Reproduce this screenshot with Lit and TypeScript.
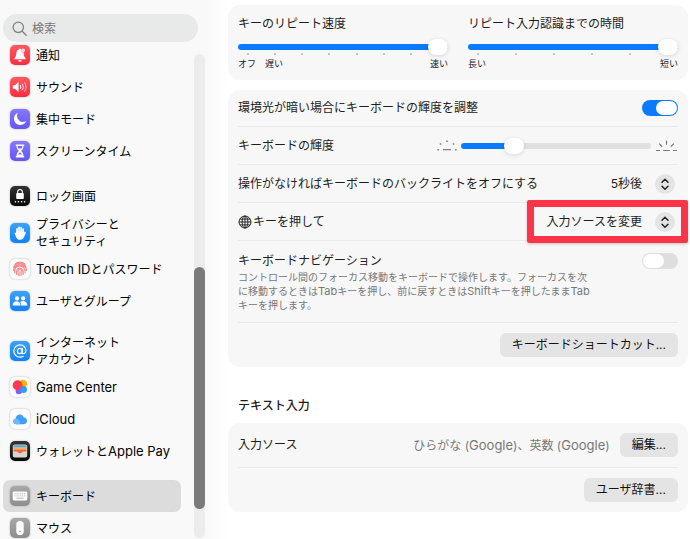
import { LitElement, html, svg, css, nothing } from "lit";
import { customElement, property } from "lit/decorators.js";
import { classMap } from "lit/directives/class-map.js";

const FONT = css`Inter, "Noto Sans CJK JP", sans-serif`;

// Wraps Latin runs so they can be set one size larger than the kana around them.
const mixed = (text: string) =>
  text
    .split(/([A-Za-z][A-Za-z ]*[A-Za-z])/)
    .map((part, i) => (i % 2 ? html`<span class="latin">${part}</span>` : part));

const glyphs: Record<string, unknown> = {
  bell: svg`<path fill="#fff" d="M10 3.400c.5 0 .9.3 1 .8l.3.2a2 2 0 0 0 1.600 3c.3 0 .5 0 .7-.1.2 2.900.5 4.600 1.800 5.600.5.5.3 1.300-.4 1.300H5c-.7 0-.9-.8-.4-1.300C6.300 11.700 6 9.800 6.500 7.300 6.800 5.600 7.700 4.700 9 4.200c.1-.5.5-.8 1-.8z"/><circle cx="13.100" cy="5.300" r="1.900" fill="#ffd6d8"/><path fill="#fff" d="M8.200 15.200h3.600a1.800 1.600 0 0 1-3.600 0z"/>`,
  sound: svg`<path fill="#fff" d="M2.800 8.200h2.100L8.500 5v10l-3.600-3.200H2.800z"/><g fill="none" stroke="#fff" stroke-linecap="round"><path d="M10.400 8.300q1.100 1.700 0 3.400"/><path d="M12.500 7q2 3 0 6" opacity=".85"/><path d="M14.700 5.700q2.900 4.300 0 8.600" opacity=".7"/></g>`,
  moon: svg`<path fill="#fff" d="M8 3.800a6.300 6.300 0 1 0 8.200 8.100A5.900 5.900 0 0 1 8 3.800z"/>`,
  hourglass: svg`<path fill="#fff" d="M5.800 3.500h8.400v1.600h-.8c0 2.500-.9 3.700-2.300 4.900 1.400 1.200 2.300 2.400 2.300 4.900h.8v1.600H5.800v-1.600h.8c0-2.500.9-3.700 2.300-4.900-1.400-1.200-2.300-2.400-2.300-4.900h-.8z"/><path fill="#7468f5" d="M7.800 5.100h4.400c0 1-.2 1.700-.5 2.300H8.300c-.3-.6-.5-1.300-.5-2.300zM10 11.200c1 .8 1.600 1.500 1.900 2.300H8.100c.3-.8.9-1.500 1.900-2.300z"/>`,
  lock: svg`<rect x="6.200" y="7" width="7.600" height="6" rx="1" fill="#fff"/><path d="M7.700 7.300V5.800a2.300 2.300 0 0 1 4.600 0v1.500" fill="none" stroke="#fff" stroke-width="1.100"/><g fill="#fff"><circle cx="5.400" cy="15.700" r=".8"/><circle cx="8.400" cy="15.700" r=".8"/><circle cx="11.600" cy="15.700" r=".8"/><circle cx="14.600" cy="15.700" r=".8"/></g>`,
  hand: svg`<g stroke="#fff" stroke-width="1.700" stroke-linecap="round"><path d="M7 10V5.800M9 9V4.300M11.100 9V4.500M13.100 10V6M5.400 10.500 7 13M15 9.500 13.600 13"/></g><path fill="#fff" d="M6.100 8.500h7.900v4.300c0 2.500-1.500 4-3.800 4-2.200 0-3.500-1-4.400-3.100z"/>`,
  finger: svg`<g fill="none" stroke="#f5878d" stroke-width="1.100" stroke-linecap="round"><path d="M5 5.200a7 7 0 0 1 10 0M3.600 8.300C5 3.800 13.800 3 16 8.300M3.500 11.500c0-7.200 13-7.200 13 0M4.700 14c-1.300-9.500 11.300-9.500 10.500-.2M6.600 15.500c-1.500-8.500 7.300-8.800 6.900-.3M8.500 16.300c-.9-5-.6-6.300 1.500-6.300s2 2 1.700 6.300M10 12v4.600"/></g>`,
  users: svg`<g fill="#fff"><circle cx="7" cy="7.400" r="2.100"/><circle cx="13.200" cy="7.400" r="2.100"/><path d="M2.600 14.500c0-5.600 8-5.600 8 0zM11.300 14.500c0-1.700-.4-2.700-1.200-3.500 2.300-2.200 7.300-1 7.300 3.500z"/></g>`,
  at: svg`<g fill="none" stroke="#fff" stroke-width="1.200" stroke-linecap="round"><ellipse cx="9.800" cy="10" rx="2.400" ry="2.700"/><path d="M12.500 7.300 12 11.400c-.2 2.200 3.900 1.800 3.900-1.800 0-3.400-2.600-5.700-5.900-5.700a6.100 6.100 0 0 0 0 12.200c1.300 0 2.300-.3 3.200-.8"/></g>`,
  game: svg`<circle cx="13" cy="7" r="4.200" fill="#fdb10b"/><circle cx="8.800" cy="14" r="3.200" fill="#8a5cf0"/><circle cx="7.600" cy="8.200" r="4.900" fill="#fb3a50"/><circle cx="13.400" cy="12.500" r="3.600" fill="#2c9ff8"/><path d="M10 12.200a3.600 3.600 0 0 1 2-3.100l.4 1.400-1.300 2.300z" fill="#f0427b"/>`,
  cloud: svg`<path fill="#3f9ff8" d="M6.400 15.200c-4.200 0-4.200-5-.8-5.400.2-4.600 6.700-6 8.200-1.200 4.300.1 4.300 6.600.2 6.600z"/><path fill="#6bbcfc" d="M6.400 15.200c-4.200 0-4.200-5-.8-5.400 2.500-.6 5 2.200 4.200 5.400z"/>`,
  wallet: svg`<rect x="2.800" y="3.500" width="14.400" height="13" rx="1.800" fill="#d8d5cf"/><path fill="#4fa7e8" d="M4.600 4.200h10.800q1 0 1 1v1.300H3.600V5.200q0-1 1-1z"/><path fill="#fdb72b" d="M3.600 6.500h12.800v2H3.600z"/><path fill="#f4605c" d="M3.600 8.500h12.800v2H13c-.7 0-.9 1.700-3 1.700s-2.300-1.700-3-1.700H3.600z"/>`,
  keyboard: svg`<rect x="2.700" y="5.500" width="14.600" height="9" rx="1.400" fill="#fff"/><g stroke="#b4b4b4" stroke-width="1"><path stroke-dasharray="1.200 .7" d="M4.500 7.800h11M4.500 9.900h11"/><path d="M6.300 12.200h7.400"/></g>`,
  mouse: svg`<rect x="6.300" y="3" width="7.400" height="14" rx="3.600" fill="#fff"/><circle cx="10" cy="13.500" r=".8" fill="#888"/>`,
};

interface Pane {
  glyph: string;
  tone: string;
  lines: string[];
  selected?: boolean;
}

const groups: Pane[][] = [
  [
    { glyph: "bell", tone: "red", lines: ["通知"] },
    { glyph: "sound", tone: "red", lines: ["サウンド"] },
    { glyph: "moon", tone: "indigo", lines: ["集中モード"] },
    { glyph: "hourglass", tone: "indigo", lines: ["スクリーンタイム"] },
  ],
  [
    { glyph: "lock", tone: "black", lines: ["ロック画面"] },
    { glyph: "hand", tone: "blue", lines: ["プライバシーと", "セキュリティ"] },
    { glyph: "finger", tone: "white", lines: ["Touch IDとパスワード"] },
    { glyph: "users", tone: "blue", lines: ["ユーザとグループ"] },
  ],
  [
    { glyph: "at", tone: "blue", lines: ["インターネット", "アカウント"] },
    { glyph: "game", tone: "white", lines: ["Game Center"] },
    { glyph: "cloud", tone: "white", lines: ["iCloud"] },
    { glyph: "wallet", tone: "black", lines: ["ウォレットとApple Pay"] },
  ],
  [
    { glyph: "keyboard", tone: "gray", lines: ["キーボード"], selected: true },
    { glyph: "mouse", tone: "gray", lines: ["マウス"] },
  ],
];

@customElement("settings-sidebar")
export class SettingsSidebar extends LitElement {
  static styles = css`
    :host {
      display: flex;
      position: relative;
      height: 100%;
      overflow: hidden;
      background: #f9f9f9;
      font: 400 12px/17px ${FONT};
      color: #000;
    }
    .search {
      position: absolute;
      z-index: 1;
      top: 14px;
      left: 3px;
      right: 10px;
      height: 28px;
      display: flex;
      align-items: center;
      gap: 5px;
      padding: 0 9px;
      box-sizing: border-box;
      border-radius: 14px;
      background: #e8e9e9;
      color: #808080;
    }
    .search svg {
      width: 15px;
      height: 15px;
      flex: none;
    }
    .search input {
      flex: 1;
      min-width: 0;
      border: 0;
      padding: 0;
      outline: 0;
      background: none;
      font: inherit;
      color: #333;
    }
    .search input::placeholder {
      color: #777;
      opacity: 1;
    }
    nav {
      flex: 1;
      min-width: 0;
      padding: 39px 13px 0 3px;
      display: flex;
      flex-direction: column;
      gap: 13px;
    }
    ul {
      list-style: none;
      margin: 0;
      padding: 0;
    }
    a {
      display: flex;
      align-items: center;
      gap: 6px;
      box-sizing: border-box;
      min-height: 32px;
      padding: 3px 7px;
      border-radius: 7px;
      color: inherit;
      text-decoration: none;
      white-space: nowrap;
    }
    a.two {
      min-height: 41px;
    }
    a.selected {
      background: #dcdcdc;
    }
    .line {
      display: block;
    }
    .latin {
      font-size: 13px;
    }
    .tile {
      flex: none;
      width: 20px;
      height: 20px;
      border-radius: 5px;
      box-shadow: 0 0 2px rgba(0, 0, 0, 0.3);
    }
    .tile svg {
      display: block;
    }
    .red { background: linear-gradient(#ff5a60, #fb2c40); }
    .indigo { background: linear-gradient(#8579fb, #6457f3); }
    .black { background: linear-gradient(#333, #080808); }
    .blue { background: linear-gradient(#3ba2fb, #1282f6); }
    .white { background: #fbfbfb; }
    .gray { background: linear-gradient(#a8a8a8, #8d8d8d); }
    .track {
      flex: none;
      width: 11px;
      margin: 54px 3px 1px 0;
      border-radius: 6px;
      background: #ececec;
    }
    .spacer {
      height: 44%;
    }
    .thumb {
      height: 50%;
      border-radius: 6px;
      background: #7a7a7a;
    }
  `;

  render() {
    return html`
      <label class="search">
        <svg viewBox="0 0 15 15" fill="none" stroke="#808080" stroke-width="1.300" stroke-linecap="round" aria-hidden="true">
          <circle cx="6.300" cy="6.300" r="5.200" /><path d="m10.200 10.200 4 4" />
        </svg>
        <input type="text" placeholder="検索" aria-label="検索" />
      </label>
      <nav>
        ${groups.map(
          (group) => html`<ul>
            ${group.map(
              (p) => html`<li>
                <a href="#${p.glyph}" class=${classMap({ selected: !!p.selected, two: p.lines.length > 1 })} aria-current=${p.selected ? "page" : nothing}>
                  <span class="tile ${p.tone}"><svg width="20" height="20" viewBox="0 0 20 20" aria-hidden="true">${glyphs[p.glyph]}</svg></span>
                  <span>${p.lines.map((l) => html`<span class="line">${mixed(l)}</span>`)}</span>
                </a>
              </li>`
            )}
          </ul>`
        )}
      </nav>
      <div class="track"><div class="spacer"></div><div class="thumb"></div></div>
    `;
  }
}

@customElement("range-slider")
export class RangeSlider extends LitElement {
  @property({ type: Number }) value = 100;
  @property() name = "";

  static styles = css`
    :host {
      display: block;
    }
    input {
      appearance: none;
      display: block;
      position: relative;
      z-index: 1;
      width: 100%;
      height: 16px;
      margin: 0;
      background: none;
    }
    input::-webkit-slider-runnable-track {
      height: 6px;
      border-radius: 3px;
      background: linear-gradient(to right, #0a7aff var(--fill), #dfe0e0 var(--fill));
    }
    input::-webkit-slider-thumb {
      appearance: none;
      width: 20px;
      height: 16px;
      margin-top: -5px;
      border-radius: 8px;
      background: #fff;
      box-shadow: 0 1px 4px rgba(0, 0, 0, 0.14);
    }
  `;

  render() {
    return html`<input type="range" min="0" max="100" .value=${String(this.value)} aria-label=${this.name} style="--fill: ${this.value}%" />`;
  }
}

@customElement("popup-menu")
export class PopupMenu extends LitElement {
  @property() value = "";
  @property() name = "";

  static styles = css`
    :host {
      display: grid;
      align-items: center;
      justify-items: end;
    }
    select,
    svg {
      grid-area: 1 / 1;
    }
    select {
      appearance: none;
      height: 24px;
      margin: 0;
      padding: 0 36px 0 0;
      border: 0;
      outline: 0;
      background: none;
      font: inherit;
      color: inherit;
      text-align-last: right;
    }
    svg {
      margin-right: 3px;
      pointer-events: none;
    }
  `;

  render() {
    return html`
      <select aria-label=${this.name}><option>${this.value}</option></select>
      <svg width="20" height="20" viewBox="0 0 20 20" fill="none" aria-hidden="true">
        <circle cx="10" cy="10" r="10" fill="#e4e4e4" />
        <path d="m7 8.300 3-3 3 3M7 12.200l3 3 3-3" stroke="#222" stroke-width="1.500" stroke-linecap="round" stroke-linejoin="round" />
      </svg>
    `;
  }
}

@customElement("app-root")
export class AppRoot extends LitElement {
  static styles = css`
    :host {
      display: grid;
      grid-template-columns: 208px minmax(0, 1fr);
      height: 100vh;
      overflow: hidden;
      background: #fff;
      font: 400 12px/16px ${FONT};
      color: #1c1c1c;
    }
    main {
      padding: 5px 2px 0 20px;
      background: linear-gradient(to right, #fafafa, #fff 20px);
    }
    .card {
      margin-bottom: 10px;
      padding: 0 10px;
      border-radius: 12px;
      background: #f7f7f7;
    }
    .speeds {
      display: grid;
      grid-template-columns: 1fr 1fr;
      gap: 20px;
      padding: 11px 10px 10px;
    }
    .speeds range-slider {
      margin-top: 7px;
    }
    .ticks {
      display: flex;
      justify-content: space-between;
      margin-top: -2px;
      padding: 0 9px;
    }
    .ticks i {
      width: 2px;
      height: 2px;
      background: #c4c4c4;
    }
    .scale {
      display: flex;
      gap: 9px;
      margin-top: 3px;
      font-size: 9px;
      line-height: 12px;
    }
    .scale span:last-child {
      margin-left: auto;
    }
    .row {
      display: flex;
      align-items: center;
      justify-content: space-between;
      box-sizing: border-box;
      min-height: 38px;
      border-bottom: 1px solid #eaeaea;
    }
    .first {
      min-height: 37px;
    }
    .row:last-child {
      border-bottom: 0;
    }
    .tall {
      min-height: 45px;
    }
    .tall:last-child {
      min-height: 44px;
    }
    .top {
      align-items: flex-start;
      padding: 12px 0 10px;
    }
    .end {
      justify-content: flex-end;
    }
    .dimmer {
      display: flex;
      align-items: center;
      gap: 4px;
    }
    .dimmer range-slider {
      width: 190px;
    }
    .globe {
      display: flex;
      align-items: center;
      gap: 1px;
    }
    .note {
      margin: 1px 0 0;
      font-size: 10px;
      line-height: 14px;
      color: #777;
    }
    .switch {
      appearance: none;
      flex: none;
      width: 36px;
      height: 16px;
      margin: 0;
      padding: 1px;
      box-sizing: border-box;
      display: flex;
      border-radius: 8px;
      background: #dedede;
    }
    .switch::before {
      content: "";
      width: 21px;
      height: 14px;
      border-radius: 7px;
      background: #fff;
    }
    .switch:checked {
      justify-content: flex-end;
      background: #0a7aff;
    }
    .marked {
      position: relative;
    }
    .marked::after {
      content: "";
      position: absolute;
      inset: -10px -10px -9px -18px;
      border: 7px solid #fc3447;
      border-radius: 2px;
      box-shadow: 0 1px 3px rgba(0, 0, 0, 0.2);
      pointer-events: none;
    }
    h2 {
      margin: 31px 10px 9px;
      font: inherit;
      font-weight: 500;
    }
    button {
      height: 24px;
      padding: 0 12px;
      border: 0;
      border-radius: 6px;
      background: #e4e4e4;
      font: inherit;
      color: #111;
    }
    .sources {
      display: flex;
      align-items: center;
      gap: 10px;
    }
    .value {
      color: #777;
    }
    .value .latin {
      font-size: 13px;
    }
    .note .latin {
      font-size: 11px;
    }
  `;

  private ticks(n: number) {
    return html`<div class="ticks">${Array.from({ length: n }, () => html`<i></i>`)}</div>`;
  }

  render() {
    return html`
      <settings-sidebar></settings-sidebar>
      <main>
        <section class="card speeds">
          <div>
            <div>キーのリピート速度</div>
            <range-slider name="キーのリピート速度" .value=${100}></range-slider>
            ${this.ticks(8)}
            <div class="scale"><span>オフ</span><span>遅い</span><span>速い</span></div>
          </div>
          <div>
            <div>リピート入力認識までの時間</div>
            <range-slider name="リピート入力認識までの時間" .value=${100}></range-slider>
            ${this.ticks(6)}
            <div class="scale"><span>長い</span><span>短い</span></div>
          </div>
        </section>

        <section class="card">
          <div class="row first">
            <label for="ambient">環境光が暗い場合にキーボードの輝度を調整</label>
            <input id="ambient" class="switch" type="checkbox" checked />
          </div>
          <div class="row">
            <span>キーボードの輝度</span>
            <div class="dimmer">
              <svg width="20" height="12" viewBox="0 0 20 12" fill="#808080" aria-hidden="true">
                <path d="M6 9h8v1.300H6zM.3 9h1.700v1.500H.3zM18 9h1.700v1.500H18zM2.800 3.200h1.500v1.500H2.800zM15.700 3.200h1.500v1.500h-1.500zM9.200.4h1.600V2H9.200z" />
              </svg>
              <range-slider name="キーボードの輝度" .value=${25}></range-slider>
              <svg width="23" height="12" viewBox="0 0 23 12" fill="none" stroke="#777" stroke-width="1.200" stroke-linecap="round" aria-hidden="true">
                <path d="M1.600 10.500h3M8.500 10.500h6M18.400 10.500h3M4.500 4l2.400 2.400M18.500 4l-2.400 2.400M11.500 1.200v3" />
              </svg>
            </div>
          </div>
          <div class="row">
            <span>操作がなければキーボードのバックライトをオフにする</span>
            <popup-menu name="バックライトをオフにする" value="5秒後"></popup-menu>
          </div>
          <div class="row">
            <span class="globe">
              <svg width="14" height="14" viewBox="0 0 14 14" fill="none" stroke="#262626" stroke-width="1" aria-hidden="true">
                <circle cx="7" cy="7" r="6" /><ellipse cx="7" cy="7" rx="2.900" ry="6" />
                <path d="M7 1v12M1 7h12M2 4.100h10M2 9.900h10" />
              </svg>
              キーを押して
            </span>
            <popup-menu class="marked" name="キーを押して" value="入力ソースを変更"></popup-menu>
          </div>
          <div class="row top">
            <div>
              <label for="navigation">キーボードナビゲーション</label>
              <p class="note">
                コントロール間のフォーカス移動をキーボードで操作します。フォーカスを次<br />${mixed("に移動するときはTabキーを押し、前に戻すときはShiftキーを押したままTab")}<br />キーを押します。
              </p>
            </div>
            <input id="navigation" class="switch" type="checkbox" />
          </div>
          <div class="row tall end">
            <button type="button">キーボードショートカット...</button>
          </div>
        </section>

        <h2>テキスト入力</h2>
        <section class="card">
          <div class="row tall">
            <span>入力ソース</span>
            <div class="sources">
              <span class="value">${mixed("ひらがな (Google)、英数 (Google)")}</span>
              <button type="button">編集...</button>
            </div>
          </div>
          <div class="row tall end">
            <button type="button">ユーザ辞書...</button>
          </div>
        </section>
      </main>
    `;
  }
}
